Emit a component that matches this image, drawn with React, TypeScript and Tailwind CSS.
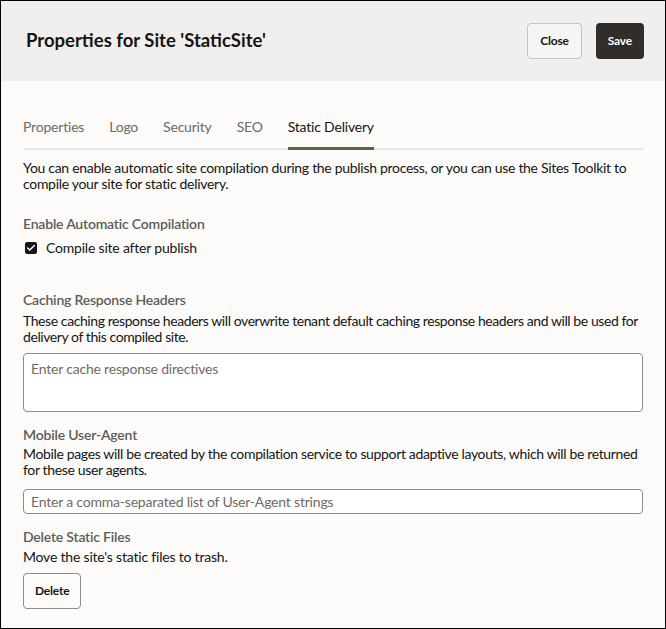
import { Check } from 'lucide-react'

const font = { fontFamily: 'Lato, "Noto Sans", Arial, sans-serif' }

const tabs = ['Properties', 'Logo', 'Security', 'SEO', 'Static Delivery']

function Label({ children }: { children: React.ReactNode }) {
  return <div className="text-[14px] font-semibold leading-5 text-[#5f5b57]">{children}</div>
}

export default function App() {
  return (
    <div className="h-[629px] w-[666px] overflow-hidden border border-black bg-[#fcfbfa] tracking-[-0.2px] text-[#161513]" style={font}>
      {/* header */}
      <div className="flex h-[80px] items-center justify-between bg-[#f1efed] pl-[25px] pr-[21px]">
        <h1 className="text-[18.5px] font-bold tracking-normal text-[#161513]">Properties for Site 'StaticSite'</h1>
        <div className="flex gap-[14px]">
          <button className="h-[36px] rounded-[4px] border border-[#c7c4c0] bg-[#f6f5f4] px-[12px] text-[12px] font-bold">Close</button>
          <button className="h-[36px] rounded-[4px] bg-[#312d2a] px-[12px] text-[12px] font-bold text-white">Save</button>
        </div>
      </div>

      <div className="px-[22px] pt-[35px]">
        {/* tabs */}
        <div className="flex gap-[25px] border-b-2 border-[#e8e6e3] text-[14px]">
          {tabs.map((t) => (
            <div
              key={t}
              className={
                t === 'Static Delivery'
                  ? '-mb-[2px] border-b-[3px] border-[#4f6f3f] pb-[10px] text-[#161513]'
                  : 'pb-[10px] text-[#6f6a66]'
              }
            >
              {t}
            </div>
          ))}
        </div>

        <p className="mt-[10px] text-[14px] leading-[16px] tracking-[-0.3px]">
          You can enable automatic site compilation during the publish process, or you can use the Sites Toolkit to compile your site for static delivery.
        </p>

        <div className="mt-[22px]">
          <Label>Enable Automatic Compilation</Label>
          <label className="mt-[3px] flex items-center gap-[9px] text-[14px]">
            <span className="ml-[2px] flex h-[12px] w-[12px] items-center justify-center rounded-[2px] bg-[#161513]">
              <Check size={10} strokeWidth={3.5} className="text-white" />
            </span>
            Compile site after publish
          </label>
        </div>

        <div className="mt-[32px]">
          <Label>Caching Response Headers</Label>
          <p className="mt-[3px] text-[14px] leading-[16px] tracking-[-0.42px]">
            These caching response headers will overwrite tenant default caching response headers and will be used for delivery of this compiled site.
          </p>
          <div className="mt-[8px] h-[59px] rounded-[4px] border border-[#8f8b87] bg-white px-[7px] py-[4px] text-[14px] text-[#6f6a66]">
            Enter cache response directives
          </div>
        </div>

        <div className="mt-[13px]">
          <Label>Mobile User-Agent</Label>
          <p className="mt-[1px] text-[14px] leading-[16px] tracking-[-0.35px]">
            Mobile pages will be created by the compilation service to support adaptive layouts, which will be returned for these user agents.
          </p>
          <div className="mt-[11px] flex h-[25px] items-center rounded-[4px] border border-[#8f8b87] bg-white px-[7px] text-[14px] text-[#6f6a66]">
            Enter a comma-separated list of User-Agent strings
          </div>
        </div>

        <div className="mt-[13px]">
          <Label>Delete Static Files</Label>
          <p className="mt-[2px] text-[14px] leading-[16px]">Move the site's static files to trash.</p>
          <button className="mt-[8px] h-[36px] rounded-[4px] border border-[#8f8b87] bg-[#fcfbfa] px-[11px] text-[12px] font-bold">Delete</button>
        </div>
      </div>
    </div>
  )
}
